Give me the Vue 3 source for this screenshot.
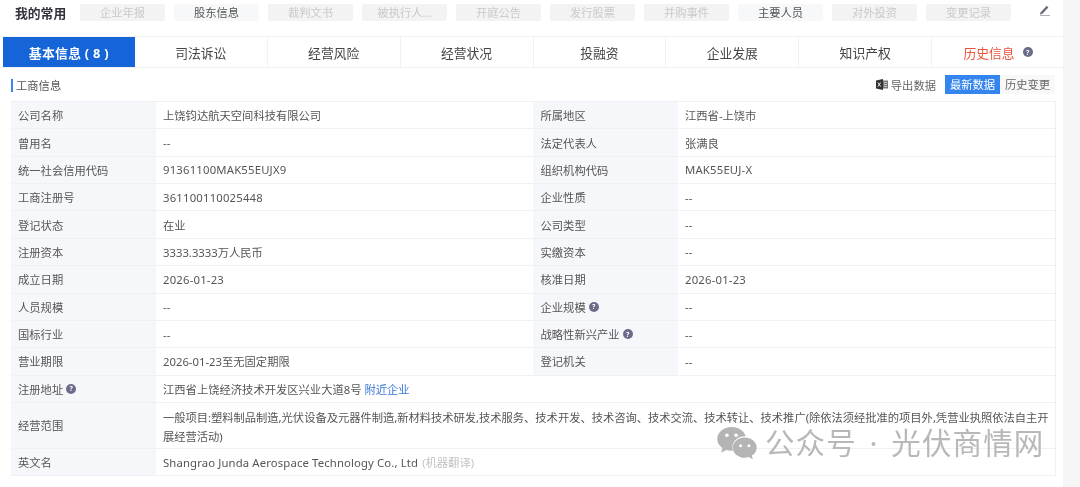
<script setup>
const chips = [
  { t: '企业年报' }, { t: '股东信息', on: true }, { t: '裁判文书' }, { t: '被执行人...' }, { t: '开庭公告' },
  { t: '发行股票' }, { t: '并购事件' }, { t: '主要人员', on: true }, { t: '对外投资' }, { t: '变更记录' }
]
const tabs = ['司法诉讼', '经营风险', '经营状况', '投融资', '企业发展', '知识产权']
const rows = [
  ['公司名称', '上饶钧达航天空间科技有限公司', '所属地区', '江西省-上饶市'],
  ['曾用名', '--', '法定代表人', '张满良'],
  ['统一社会信用代码', '91361100MAK55EUJX9', '组织机构代码', 'MAK55EUJ-X'],
  ['工商注册号', '361100110025448', '企业性质', '--'],
  ['登记状态', '在业', '公司类型', '--'],
  ['注册资本', '3333.3333万人民币', '实缴资本', '--'],
  ['成立日期', '2026-01-23', '核准日期', '2026-01-23'],
  ['人员规模', '--', '企业规模', '--', 'help'],
  ['国标行业', '--', '战略性新兴产业', '--', 'help'],
  ['营业期限', '2026-01-23至无固定期限', '登记机关', '--']
]
const isLatin = (s) => /^[A-Z0-9-]+$/.test(s)
</script>

<template>
  <div class="page">
    <main class="main">
      <div class="fav">
        <strong class="fav-title">我的常用</strong>
        <div class="chips">
          <span v-for="c in chips" :key="c.t" class="chip" :class="{ on: c.on }">{{ c.t }}</span>
        </div>
        <svg class="pencil" width="12" height="11" viewBox="0 0 12 11">
          <path d="M1.500 7.600 7.700.8l1.700 1.600-6.200 6.600-2.200.6z" fill="#6b6b80" />
          <rect x="1" y="10" width="10" height="0.9" fill="#a8a8b4" />
        </svg>
      </div>

      <nav class="tabs">
        <div class="tab active">基本信息 ( 8 )</div>
        <div v-for="t in tabs" :key="t" class="tab">{{ t }}</div>
        <div class="tab history">历史信息 <i class="help tab-help">?</i></div>
      </nav>

      <div class="head">
        <div class="title">工商信息</div>
        <div class="tools">
          <svg class="xls" width="12" height="11" viewBox="0 0 12 11">
            <rect x="6" y="1.500" width="6" height="8" fill="#777" />
            <path d="M0 1.500 7 0v11L0 9.500z" fill="#333" />
            <path d="m2 3.500 2.600 4M4.600 3.500 2 7.500" stroke="#fff" stroke-width=".9" />
            <path d="M8 3.500h3M8 5.500h3M8 7.500h3" stroke="#fff" stroke-width=".6" />
          </svg>
          <span class="export">导出数据</span>
          <div class="switch">
            <span class="sw sw-on">最新数据</span>
            <span class="sw">历史变更</span>
          </div>
        </div>
      </div>

      <section class="table">
        <div v-for="r in rows" :key="r[0]" class="row">
          <div class="label">{{ r[0] }}</div>
          <div class="value" :class="{ latin: isLatin(r[1]) }">{{ r[1] }}</div>
          <div class="label">{{ r[2] }}<i v-if="r[4]" class="help">?</i></div>
          <div class="value" :class="{ latin: isLatin(r[3]) }">{{ r[3] }}</div>
        </div>
        <div class="row wide">
          <div class="label">注册地址<i class="help">?</i></div>
          <div class="value">江西省上饶经济技术开发区兴业大道8号 <a class="link">附近企业</a></div>
        </div>
        <div class="row wide tall">
          <div class="label">经营范围</div>
          <div class="value scope">一般项目:塑料制品制造,光伏设备及元器件制造,新材料技术研发,技术服务、技术开发、技术咨询、技术交流、技术转让、技术推广(除依法须经批准的项目外,凭营业执照依法自主开展经营活动)</div>
        </div>
        <div class="row wide">
          <div class="label">英文名</div>
          <div class="value"><span class="en">Shangrao Junda Aerospace Technology Co., Ltd</span> <span class="mt">(机器翻译)</span></div>
        </div>
      </section>

      <div class="mark">
        <svg width="42" height="33" viewBox="0 0 43 36">
          <path d="M15.500 0C7 0 0 5.800 0 13c0 4 2.200 7.600 5.600 10l-1.400 5 5.600-3c2 .6 3.700.9 5.700.9h1.500a13 13 0 0 1-.5-3.500C16.500 15 24 9.500 31 10.200 29.500 4.300 23.200 0 15.500 0z" fill="#b4b4b4" />
          <circle cx="10.500" cy="9" r="2" fill="#fff" />
          <circle cx="20.500" cy="9" r="2" fill="#fff" />
          <path d="M30 11.500c-7.200 0-13 4.900-13 11s5.800 11 13 11c1.600 0 3-.3 4.400-.7l4.400 2.700-1.100-4.300c3.300-2 5.300-5.200 5.300-8.700 0-6.100-5.800-11-13-11z" fill="#b4b4b4" />
          <circle cx="25.500" cy="20.500" r="1.700" fill="#fff" />
          <circle cx="34.500" cy="20.500" r="1.700" fill="#fff" />
        </svg>
        <span class="mark-text">公众号 · 光伏商情网</span>
      </div>
    </main>
    <aside class="strip"></aside>
  </div>
</template>

<style>
html, body { margin: 0; background: #fff; overflow: hidden; }
</style>

<style scoped>
.page {
  display: flex;
  height: 487px;
  overflow: hidden;
  font-family: "Noto Sans", "Noto Sans CJK SC", sans-serif;
  font-size: 11.300px;
  color: #555;
  filter: blur(0.35px);
}
.main { position: relative; width: 1063px; flex: none; background: #fff; }
.strip { flex: 1; background: #f6f6f6; }

.fav { display: flex; align-items: center; height: 24px; padding-left: 15px; margin-bottom: 12px; }
.fav-title { width: 65px; font-size: 12.800px; font-weight: 700; color: #33333f; }
.chips { display: flex; gap: 9px; }
.chip { width: 85px; height: 17px; line-height: 17px; text-align: center; background: #f3f3f3; color: #c9c9c9; border-radius: 2px; }
.chip.on { background: #f7f8fa; color: #555; }
.pencil { margin-left: 28px; margin-top: -3px; }

.tabs { display: flex; box-sizing: border-box; height: 32px; margin-right: -1px; padding-left: 3px; border-top: 1px solid #f3f3f3; border-bottom: 1px solid #f0f0f0; }
.tab { flex: 1; display: flex; align-items: center; justify-content: center; font-size: 12.800px; color: #444; border-right: 1px solid #f2f2f2; }
.tab:last-child { border-right: 0; }
.active { background: #1565d8; color: #fff; font-weight: 700; border-right: 0; letter-spacing: .3px; }
.history { color: #e8553f; gap: 4px; }

.help {
  display: inline-flex; align-items: center; justify-content: center;
  width: 10px; height: 10px; margin-left: 3px; border-radius: 50%;
  background: #6c6c8a; color: #fff; font-size: 7px; font-style: normal; font-weight: 700; line-height: 1;
}
.tab-help { margin-left: 4px; }

.head { display: flex; justify-content: space-between; align-items: center; height: 33px; padding: 0 8px 0 11px; }
.title { border-left: 2px solid #3f86ea; padding-left: 3px; height: 13px; line-height: 13px; margin-top: 2px; color: #555; }
.tools { display: flex; align-items: center; }
.xls { margin-right: 3px; }
.export { color: #666; margin-right: 9px; }
.switch { display: flex; height: 19px; }
.sw { width: 55px; line-height: 19px; text-align: center; background: #f8f8f9; color: #666; }
.sw-on { background: #3485ee; color: #fff; }

.table { margin-left: 10.500px; width: 1044.500px; border-top: 1px solid #eef0f3; border-right: 1px solid #eef0f3; }
.row { display: grid; grid-template-columns: 145px 377.500px 144.500px 1fr; min-height: 27.360px; border-bottom: 1px solid #f0f1f4; box-sizing: border-box; }
.wide { grid-template-columns: 145px 1fr; }
.tall { min-height: 46px; }
.label { display: flex; align-items: center; padding-left: 7.500px; background: #f6f7fb; color: #555; }
.value { display: flex; align-items: center; padding-left: 7.500px; background: #fff; color: #555; white-space: pre-wrap; }
.latin { letter-spacing: .2px; }
.en { letter-spacing: .14px; }
.scope { display: block; padding: 5px 3px 0 7.500px; line-height: 19px; letter-spacing: -.035px; }
.link { color: #3b78d8; }
.mt { color: #c4c4c4; margin-left: 4px; }

.mark { position: absolute; left: 716px; top: 425px; display: flex; align-items: center; gap: 7px; }
.mark-text { font-size: 29.500px; letter-spacing: 1.100px; word-spacing: 4px; color: #b8b8b8; line-height: 36px; white-space: pre; }
</style>
